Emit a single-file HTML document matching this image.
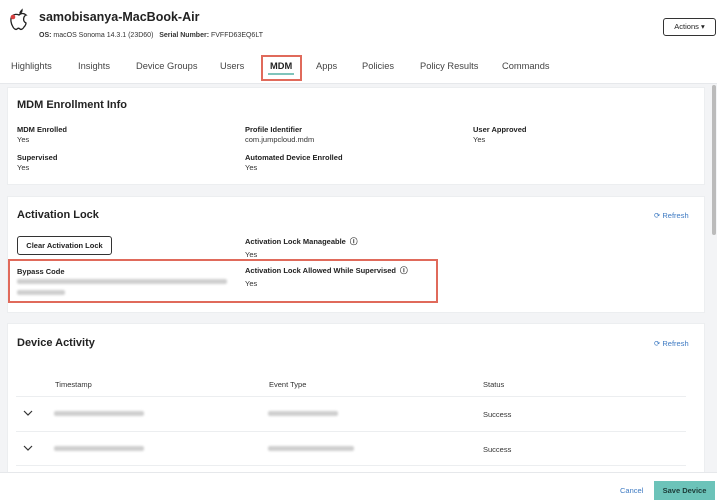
<!DOCTYPE html>
<html><head><style>
*{box-sizing:border-box;margin:0;padding:0}
body{width:717px;height:500px;overflow:hidden;background:#f3f4f6;font-family:"Liberation Sans",sans-serif;color:#222;position:relative;font-size:8px}
.hdr{position:absolute;left:0;top:0;width:717px;height:84px;background:#fff;border-bottom:1px solid #e6e8eb}
.abs{position:absolute;white-space:nowrap}
.card{position:absolute;left:7px;width:698px;background:#fff;border:1px solid #eceef0}
.lbl{font-weight:bold;font-size:7.5px;color:#222}
.val{font-size:7.5px;color:#333}
.h{font-weight:bold;font-size:11px;color:#222}
.tab{font-size:9.3px;color:#444;top:61px}
.refresh{color:#3c79c2;font-size:7.5px}
.red{position:absolute;border:2px solid #e06a5b}
.blur{position:absolute;height:5px;background:#cfcfcf;border-radius:2px;filter:blur(1px)}
.line{position:absolute;height:1px;background:#eceef0}
</style></head><body>
<div class="hdr">
<svg class="abs" style="left:9px;top:8px" width="20" height="24" viewBox="0 0 20 24"><path d="M13 2c-1 1-2 2-2 3 1 0 2-1 2-3z" fill="none" stroke="#222" stroke-width="1.3"/><path d="M10 7c-2-1-5-1-7 1-2 3-1 8 1 11 1 2 3 3 4 2 1-1 2-1 3 0 1 1 3 0 4-2 1-1 2-3 2-4-2-1-3-3-2-6 1-1 1-2 2-2-2-2-5-2-7 0z" fill="none" stroke="#222" stroke-width="1.3"/><circle cx="4" cy="9" r="2.3" fill="#d94040"/></svg>
<div class="abs" style="left:39px;top:10px;font-size:12.5px;font-weight:bold">samobisanya-MacBook-Air</div>
<div class="abs" style="left:39px;top:32px;font-size:7px;color:#333"><b>OS:</b> macOS Sonoma 14.3.1 (23D60) &nbsp;&nbsp;<b>Serial Number:</b> FVFFD63EQ6LT</div>
<div class="abs" style="left:663px;top:18px;width:53px;height:18px;border:1.3px solid #333;border-radius:3px;font-size:7.5px;text-align:center;line-height:16px">Actions ▾</div>
<div class="abs tab" style="left:11px">Highlights</div>
<div class="abs tab" style="left:78px">Insights</div>
<div class="abs tab" style="left:136px">Device Groups</div>
<div class="abs tab" style="left:220px">Users</div>
<div class="abs tab" style="left:270px;font-weight:bold;color:#222">MDM</div>
<div class="abs" style="left:268px;top:73px;width:26px;height:2px;background:#7fc4bb"></div>
<div class="red" style="left:261px;top:55px;width:41px;height:26px"></div>
<div class="abs tab" style="left:316px">Apps</div>
<div class="abs tab" style="left:362px">Policies</div>
<div class="abs tab" style="left:420px">Policy Results</div>
<div class="abs tab" style="left:502px">Commands</div>
</div>
<div class="abs" style="left:712px;top:85px;width:4px;height:150px;background:#bbb;border-radius:2px"></div>

<div class="card" style="top:87px;height:98px">
<div class="abs h" style="left:9px;top:11px">MDM Enrollment Info</div>
<div class="abs lbl" style="left:9px;top:37px">MDM Enrolled</div><div class="abs val" style="left:9px;top:47px">Yes</div>
<div class="abs lbl" style="left:237px;top:37px">Profile Identifier</div><div class="abs val" style="left:237px;top:47px">com.jumpcloud.mdm</div>
<div class="abs lbl" style="left:465px;top:37px">User Approved</div><div class="abs val" style="left:465px;top:47px">Yes</div>
<div class="abs lbl" style="left:9px;top:65px">Supervised</div><div class="abs val" style="left:9px;top:75px">Yes</div>
<div class="abs lbl" style="left:237px;top:65px">Automated Device Enrolled</div><div class="abs val" style="left:237px;top:75px">Yes</div>
</div>

<div class="card" style="top:196px;height:117px">
<div class="abs h" style="left:9px;top:12px">Activation Lock</div>
<div class="abs refresh" style="left:646px;top:14px">⟳ Refresh</div>
<div class="abs" style="left:9px;top:39px;width:95px;height:19px;border:1.3px solid #333;border-radius:3px;font-size:7.5px;font-weight:bold;text-align:center;line-height:17px">Clear Activation Lock</div>
<div class="abs lbl" style="left:237px;top:39px">Activation Lock Manageable &nbsp;ⓘ</div><div class="abs val" style="left:237px;top:53px">Yes</div>
<div class="abs lbl" style="left:9px;top:70px">Bypass Code</div>
<div class="blur" style="left:9px;top:82px;width:210px"></div>
<div class="blur" style="left:9px;top:93px;width:48px"></div>
<div class="abs lbl" style="left:237px;top:68px">Activation Lock Allowed While Supervised &nbsp;ⓘ</div><div class="abs val" style="left:237px;top:82px">Yes</div>
</div>
<div class="red" style="left:8px;top:259px;width:430px;height:44px"></div>

<div class="card" style="top:323px;height:150px">
<div class="abs h" style="left:9px;top:13px">Device Activity</div>
<div class="abs refresh" style="left:646px;top:15px">⟳ Refresh</div>
<div class="abs val" style="left:47px;top:56px">Timestamp</div>
<div class="abs val" style="left:261px;top:56px">Event Type</div>
<div class="abs val" style="left:475px;top:56px">Status</div>
</div>
<div class="line" style="left:16px;width:670px;top:396px"></div>
<svg class="abs" style="left:23px;top:410px" width="10" height="7" viewBox="0 0 10 7"><path d="M1 1l4 4 4-4" fill="none" stroke="#333" stroke-width="1.2"/></svg>
<div class="blur" style="left:54px;top:411px;width:90px"></div>
<div class="blur" style="left:268px;top:411px;width:70px"></div>
<div class="abs val" style="left:483px;top:410px">Success</div>
<div class="line" style="left:16px;width:670px;top:431px"></div>
<svg class="abs" style="left:23px;top:445px" width="10" height="7" viewBox="0 0 10 7"><path d="M1 1l4 4 4-4" fill="none" stroke="#333" stroke-width="1.2"/></svg>
<div class="blur" style="left:54px;top:446px;width:90px"></div>
<div class="blur" style="left:268px;top:446px;width:86px"></div>
<div class="abs val" style="left:483px;top:445px">Success</div>
<div class="line" style="left:16px;width:670px;top:465px"></div>

<div class="abs" style="left:0;top:472px;width:717px;height:28px;background:#fff;border-top:1px solid #e6e8eb"></div>
<div class="abs refresh" style="left:620px;top:486px">Cancel</div>
<div class="abs" style="left:654px;top:481px;width:61px;height:19px;background:#6cc3b9;color:#1c3b38;font-size:7.5px;font-weight:bold;text-align:center;line-height:19px">Save Device</div>
</body></html>
